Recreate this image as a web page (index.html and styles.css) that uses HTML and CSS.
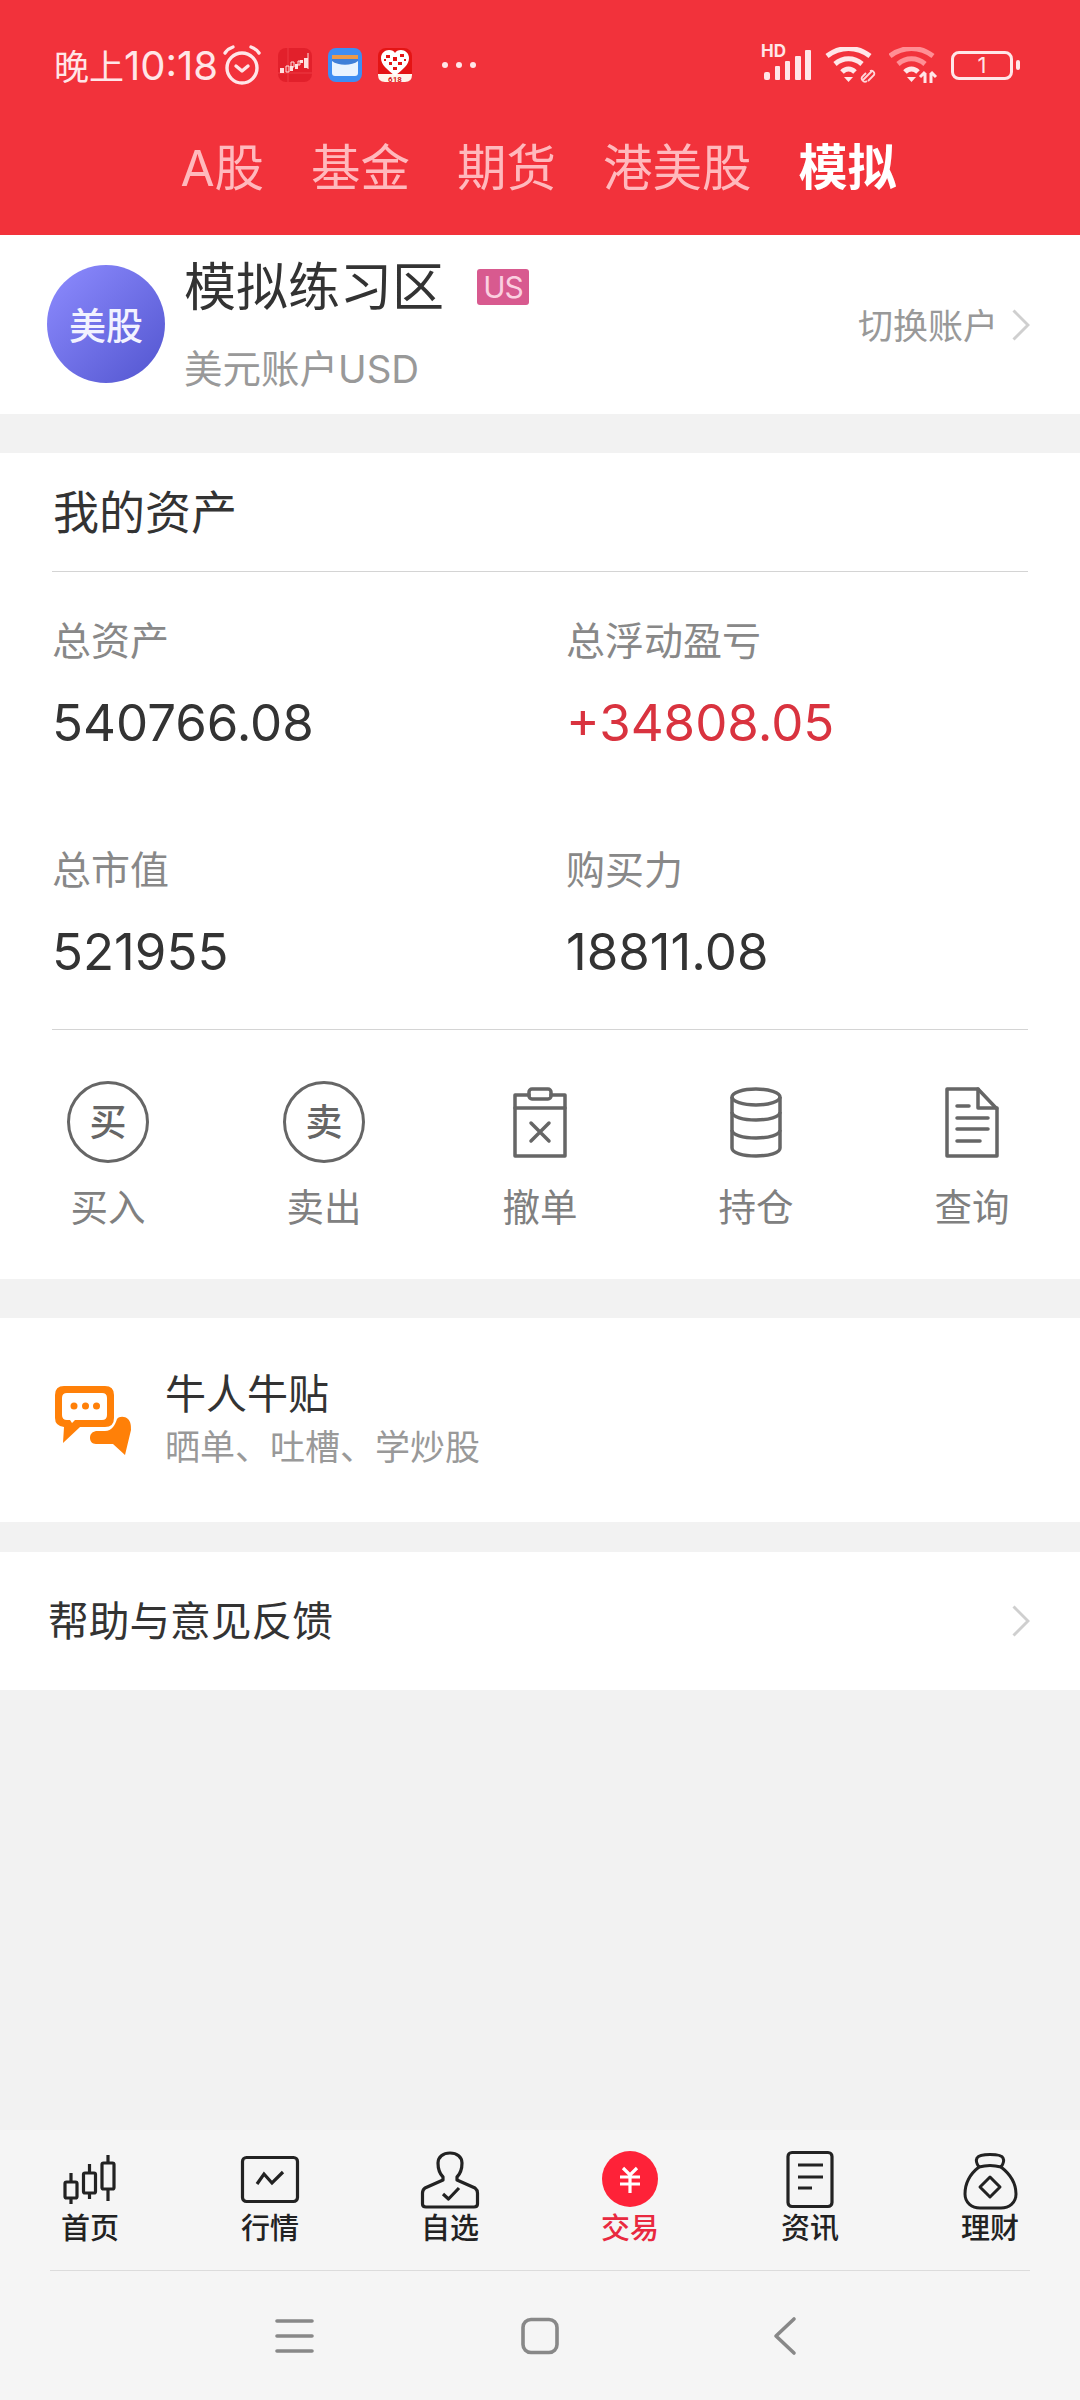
FILE: index.html
```html
<!DOCTYPE html>
<html lang="zh-CN">
<head>
<meta charset="utf-8">
<title>模拟练习区</title>
<link rel="stylesheet" href="styles.css">
</head>
<body>
<div class="page">
  <header class="header">
    <div class="status">
      <div class="status-left">
        <span class="time">晚上<span class="time-digits">10:18</span></span>
        <svg class="alarm" width="42" height="42" viewBox="0 0 42 42" fill="none" stroke="#ffe6e8" stroke-width="3.4" stroke-linecap="round" stroke-linejoin="round"><circle cx="21" cy="24" r="15"/><path d="M15 22l6 5 6-5"/><path d="M4 9c2-3 5-5 8-6"/><path d="M38 9c-2-3-5-5-8-6"/></svg>
        <svg class="app" width="34" height="34" viewBox="0 0 34 34"><rect width="34" height="34" rx="8" fill="#e2202b"/><path d="M0 25H34M10 0V34" stroke="#ee3a44" stroke-width="1"/><g fill="#ffe0e0"><rect x="2" y="20" width="4" height="5"/><rect x="12" y="18" width="3" height="5"/><rect x="17" y="16" width="3" height="5"/><rect x="22" y="12" width="3" height="3"/><rect x="26" y="10" width="4" height="10"/></g><path d="M8 18h3v6H8zM13 14h3v5h-3zM20 13h2v4h-2zM30 5v16" fill="none" stroke="#ffe0e0" stroke-width="1"/></svg>
        <svg class="app" width="34" height="34" viewBox="0 0 34 34"><rect width="34" height="34" rx="8" fill="#3e8df2"/><rect x="4" y="7" width="26" height="21" rx="3" fill="#e9f3ff"/><rect x="4" y="7" width="26" height="4" fill="#ec9a4a"/><path d="M4 11H30V13C24 18 10 18 4 13Z" fill="#3f7fd8"/></svg>
        <svg class="app" width="34" height="34" viewBox="0 0 34 34"><rect width="34" height="34" rx="8" fill="#e41414"/><path d="M0 26H34V27Q34 34 27 34H7Q0 34 0 27Z" fill="#fff4ea"/><path d="M17 28C9 21 3 17 3 10 3 5 7 2 11 2 14 2 16 3 17 5 18 3 20 2 23 2 27 2 31 5 31 10 31 17 25 21 17 28Z" fill="#fff"/><g fill="#e41414"><rect x="8" y="7" width="4" height="3"/><rect x="15" y="9" width="4" height="4"/><rect x="22" y="6" width="4" height="3"/><rect x="11" y="14" width="3" height="3"/><rect x="20" y="14" width="4" height="3"/><rect x="15" y="19" width="4" height="3"/><rect x="6" y="11" width="2" height="2"/><rect x="26" y="11" width="2" height="2"/></g><text class="app-618" x="17" y="33.5" text-anchor="middle">618</text></svg>
        <div class="dots"><i></i><i></i><i></i></div>
      </div>
      <div class="status-right">
        <div class="signal">
          <span class="hd">HD</span>
          <svg width="50" height="34" viewBox="0 0 50 34" fill="#ffe6e8"><rect x="3" y="24" width="6" height="8" rx="2"/><rect x="14" y="18" width="5" height="14" rx="1"/><rect x="24" y="13" width="5" height="19" rx="1"/><rect x="34" y="8" width="6" height="24" rx="1"/><rect x="44" y="2" width="6" height="30" rx="1"/></svg>
        </div>
        <svg class="wifi" width="52" height="36" viewBox="0 0 52 36" fill="none" stroke-linecap="butt"><g stroke="#ffe6e8" stroke-width="5"><path d="M2 9C15-1 32-1 45 9"/><path d="M10 17C18 10 29 10 37 17"/><path d="M17 25C21 21 26 21 30 25"/></g><path d="M23.500 35L19 30H28Z" fill="#ffe6e8"/><path d="M38 33l9-9M43 34l6-6a3 3 0 0 0-4-4M41 26l-3 3a3 3 0 0 0 4 5" stroke="#ffd6da" stroke-width="1.800"/></svg>
        <svg class="wifi wifi-b" width="50" height="36" viewBox="0 0 50 36" fill="none"><g stroke="#ff8f95" stroke-width="5"><path d="M1 9C14-1 31-1 44 9"/><path d="M9 17C17 10 28 10 36 17"/></g><path d="M16 25C20 21 25 21 29 25" stroke="#ffe6e8" stroke-width="5"/><path d="M22.500 35L18 30H27Z" fill="#ffe6e8"/><path d="M36 36V26M31 30l5-5M42 36V26M42 25l5 5" stroke="#ffe6e8" stroke-width="3"/></svg>
        <div class="battery"><div class="battery-body">1</div><i class="battery-nub"></i></div>
      </div>
    </div>
    <nav class="tabs">
      <span class="tab">A股</span>
      <span class="tab">基金</span>
      <span class="tab">期货</span>
      <span class="tab">港美股</span>
      <span class="tab tab-active">模拟</span>
    </nav>
  </header>

  <section class="account">
    <div class="avatar">美股</div>
    <div class="account-info">
      <div class="account-name"><span>模拟练习区</span><span class="badge">US</span></div>
      <div class="account-sub">美元账户USD</div>
    </div>
    <div class="switch">
      <span class="switch-text">切换账户</span>
      <svg class="chev" width="18" height="32" viewBox="0 0 18 32" fill="none"><path d="M1.500 1.500L16 16 1.500 30.500" stroke="#cfcfcf" stroke-width="3"/></svg>
    </div>
  </section>

  <section class="assets">
    <h2 class="assets-title">我的资产</h2>
    <div class="stats">
      <div><div class="stat-label">总资产</div><div class="stat-value">540766.08</div></div>
      <div><div class="stat-label">总浮动盈亏</div><div class="stat-value stat-up">+34808.05</div></div>
      <div><div class="stat-label">总市值</div><div class="stat-value">521955</div></div>
      <div><div class="stat-label">购买力</div><div class="stat-value">18811.08</div></div>
    </div>
    <div class="actions">
      <div class="action"><div class="ring">买</div><span>买入</span></div>
      <div class="action"><div class="ring">卖</div><span>卖出</span></div>
      <div class="action">
        <svg width="80" height="80" viewBox="0 0 80 80" fill="none" stroke="#666" stroke-width="3.500" stroke-linejoin="round" stroke-linecap="round"><path d="M29 13H15V74H65V13H51"/><rect x="29" y="7" width="22" height="10" rx="3"/><path d="M15 26H65M31 41L49 59M49 41L31 59"/></svg>
        <span>撤单</span>
      </div>
      <div class="action">
        <svg width="80" height="80" viewBox="0 0 80 80" fill="none" stroke="#666" stroke-width="3.500" stroke-linejoin="round"><ellipse cx="40" cy="15" rx="24" ry="8"/><path d="M16 15V66C16 71 27 74 40 74S64 71 64 66V15"/><path d="M16 30C16 35 27 38 40 38S64 35 64 30"/><path d="M16 48C16 53 27 56 40 56S64 53 64 48"/></svg>
        <span>持仓</span>
      </div>
      <div class="action">
        <svg width="80" height="80" viewBox="0 0 80 80" fill="none" stroke="#666" stroke-width="3.500" stroke-linejoin="round" stroke-linecap="round"><path d="M15 7H46L65 27V74H15Z"/><path d="M46 7V26H65"/><path d="M25 24H37M25 36H56M25 47H56M25 59H48"/></svg>
        <span>查询</span>
      </div>
    </div>
  </section>

  <section class="forum">
    <svg width="76" height="69" viewBox="0 0 76 69"><path fill-rule="evenodd" d="M9 0H50Q59 0 59 9V32Q59 41 50 41H25L8 57 9 41Q0 40 0 32V9Q0 0 9 0ZM12 7Q7 7 7 12V29Q7 34 12 34H15L17 37 20 34H47Q52 34 52 29V12Q52 7 47 7Z" fill="#ff8008"/><circle cx="19" cy="20" r="3.500" fill="#ff8008"/><circle cx="30.500" cy="20" r="3.500" fill="#ff8008"/><circle cx="41.500" cy="20" r="3.500" fill="#ff8008"/><path d="M62 33C64 30 70 30 73 33 76 36 76 40 76 44L70 69 58 58H41C37 58 35 55 35 52 35 48 37 46 41 45H50C57 45 60 39 62 33Z" fill="#ff8008"/></svg>
    <div class="forum-text">
      <div class="forum-title">牛人牛贴</div>
      <div class="forum-sub">晒单、吐槽、学炒股</div>
    </div>
  </section>

  <section class="help">
    <span class="help-text">帮助与意见反馈</span>
    <svg class="chev" width="18" height="32" viewBox="0 0 18 32" fill="none"><path d="M1.500 1.500L16 16 1.500 30.500" stroke="#cfcfcf" stroke-width="3"/></svg>
  </section>

  <div class="spacer"></div>

  <footer class="footer">
    <nav class="tabbar">
      <div class="nav-item">
        <svg width="64" height="60" viewBox="0 0 64 60" fill="none" stroke="#222" stroke-width="3.200"><path d="M13 23V32M13 48V54M31.500 14V23M31.500 43V49M50 5V13M50 39V51"/><rect x="7" y="32" width="12" height="16" rx="1.500"/><rect x="25.500" y="23" width="12" height="20" rx="1.500"/><rect x="44" y="13" width="12" height="26" rx="1.500"/></svg>
        <span>首页</span>
      </div>
      <div class="nav-item">
        <svg width="64" height="60" viewBox="0 0 64 60" fill="none" stroke="#222" stroke-width="3.200"><rect x="4.500" y="7.500" width="55" height="44" rx="4"/><path d="M19 34L26 24 34 33 45 22"/></svg>
        <span>行情</span>
      </div>
      <div class="nav-item">
        <svg width="64" height="60" viewBox="0 0 64 60" fill="none" stroke="#222" stroke-width="3.200" stroke-linejoin="round"><path d="M25 27C21 23 20 17 20 13 20 7 25 3 32 3S44 7 44 13C44 17 43 23 39 27V30L57 38Q59.500 40 59.500 43V54Q59.500 57 56 57H8Q4.500 57 4.500 54V43Q4.500 40 7 38L25 30Z"/><path d="M25 44L30.500 49 41 38"/></svg>
        <span>自选</span>
      </div>
      <div class="nav-item nav-active">
        <svg width="64" height="60" viewBox="0 0 64 60"><ellipse cx="32" cy="29" rx="28" ry="28" fill="#fe2238"/><path d="M25 18L32 25 39 18M22 27H42M22 34H42M32 26V43" fill="none" stroke="#fff" stroke-width="3.200"/></svg>
        <span>交易</span>
      </div>
      <div class="nav-item">
        <svg width="64" height="60" viewBox="0 0 64 60" fill="none" stroke="#222" stroke-width="3.200"><rect x="10" y="2.500" width="44" height="54" rx="4"/><path d="M20 15H45M20 27H45M20 38H34"/></svg>
        <span>资讯</span>
      </div>
      <div class="nav-item">
        <svg width="64" height="60" viewBox="0 0 64 60" fill="none" stroke="#222" stroke-width="3" stroke-linejoin="round"><path d="M21 17C12 24 7 34 7 44 7 53 14 58 22 58H43C51 58 58 53 58 44 58 34 52 24 43 17"/><path d="M21 17C18 13 18 10 19 8 21 5 26 4.500 32 4.500S44 5 45 8C46 10 46 13 43 17 36 15 28 15 21 17Z"/><path d="M32 27L42 37 32 47 22 37Z"/></svg>
        <span>理财</span>
      </div>
    </nav>
    <div class="softkeys">
      <svg width="60" height="40" viewBox="0 0 60 40" fill="none" stroke="#888" stroke-width="3.600" stroke-linecap="round"><path d="M12 5H47M12 20H47M12 35H47"/></svg>
      <svg width="60" height="40" viewBox="0 0 60 40" fill="none" stroke="#888" stroke-width="3.600"><rect x="13" y="3.500" width="34" height="33" rx="8"/></svg>
      <svg width="60" height="40" viewBox="0 0 60 40" fill="none" stroke="#888" stroke-width="3.600" stroke-linecap="round" stroke-linejoin="round"><path d="M39 3L21 20 39 37"/></svg>
    </div>
  </footer>
</div>
</body>
</html>
```
FILE: styles.css
```css
* { box-sizing: border-box; margin: 0; padding: 0; }
html, body { width: 1080px; height: 2400px; overflow: hidden; }
body { font-family: Inter, "Noto Sans CJK SC", sans-serif; color: #333; background: #f2f2f2; }
.page { width: 1080px; height: 2400px; display: flex; flex-direction: column; }

.header { height: 235px; background: #f2323b; flex: none; }
.status { height: 130px; display: flex; justify-content: space-between; align-items: center; padding: 0 60px 0 54px; }
.status-left, .status-right { display: flex; align-items: center; }
.time { font-size: 35px; line-height: 44px; color: #ffe6e8; white-space: nowrap; padding-top: 2px; }
.time-digits { font-size: 40px; }
.alarm { margin-left: 3px; }
.app { margin-left: 16px; }
.alarm + .app { margin-left: 15px; }
.app-618 { font-family: Roboto, sans-serif; font-size: 8px; font-weight: 700; fill: #d41818; }
.dots { display: flex; gap: 8px; margin-left: 30px; }
.dots i { width: 6px; height: 6px; border-radius: 50%; background: #ffe6e8; }
.signal { position: relative; width: 50px; height: 34px; margin-right: 14px; }
.signal svg { display: block; }
.hd { position: absolute; left: 0; top: -6px; font-size: 17px; line-height: 18px; font-weight: 700; color: #ffe6e8; }
.wifi { margin-right: 12px; }
.wifi-b { margin-right: 12px; }
.battery { display: flex; align-items: center; }
.battery-body { width: 62px; height: 29px; border: 3px solid #ffe6e8; border-radius: 8px; color: #ffe6e8; font-size: 22px; line-height: 23px; text-align: center; }
.battery-nub { width: 4px; height: 10px; margin-left: 3px; background: #ffe6e8; border-radius: 2px; }

.tabs { height: 76px; display: flex; justify-content: center; align-items: center; gap: 47px; padding-right: 3px; }
.tab { font-size: 49.500px; line-height: 76px; color: #ffb9bd; white-space: nowrap; }
.tab-active { color: #fff; font-weight: 700; font-size: 49px; }

.account { height: 179px; background: #fff; display: flex; align-items: center; padding: 0 50px 0 47px; flex: none; }
.avatar { width: 118px; height: 118px; margin-top: -2px; border-radius: 50%; background: linear-gradient(135deg, #8e8cff, #5255cf); color: #f2f2ff; font-size: 37px; font-weight: 500; display: flex; align-items: center; justify-content: center; flex: none; }
.account-info { margin: 2px 0 0 19px; display: flex; flex-direction: column; gap: 26px; flex: 1; }
.account-name { font-size: 52px; line-height: 60px; display: flex; align-items: center; color: #333; }
.badge { margin: -2px 0 0 33px; width: 52px; height: 36px; border-radius: 3px; background: #d85a8f; color: #fbd0e0; font-size: 30px; line-height: 36px; letter-spacing: -1px; text-align: center; }
.account-sub { font-size: 38.500px; line-height: 50px; color: #999; }
.switch { display: flex; align-items: center; gap: 14px; font-size: 35px; color: #999; }
.switch-text { margin-bottom: 2px; }
.chev { display: block; flex: none; }

.assets { margin-top: 39px; height: 826px; background: #fff; padding-top: 0; flex: none; }
.assets-title { margin: 0 52px; height: 119px; border-bottom: 1px solid #d4d4d4; padding-left: 1px; font-size: 46px; font-weight: 400; line-height: 118px; color: #333; }
.stats { margin: 0 52px; padding: 44px 0 43px 0; display: grid; grid-template-columns: 514px 1fr; row-gap: 88px; border-bottom: 1px solid #d4d4d4; }
.stat-label { font-size: 39px; line-height: 50px; color: #888; }
.stat-value { margin-top: 22px; margin-bottom: -1px; font-size: 51px; line-height: 70px; color: #333; }
.stat-up { color: #d9333f; }
.actions { display: grid; grid-template-columns: repeat(5, 1fr); padding-top: 52px; }
.action { display: flex; flex-direction: column; align-items: center; gap: 21px; font-size: 37.500px; line-height: 50px; color: #808080; }
.action svg { display: block; }
.ring { width: 82px; height: 82px; margin: -1px 0; border: 3.500px solid #666; border-radius: 50%; display: flex; align-items: center; justify-content: center; font-size: 37px; font-weight: 500; line-height: 1; color: #666; }

.forum { margin-top: 39px; height: 204px; background: #fff; display: flex; align-items: center; padding-left: 55px; flex: none; }
.forum svg { display: block; flex: none; }
.forum-text { margin-left: 34px; padding-top: 2px; }
.forum-title { font-size: 41px; line-height: 52px; color: #333; }
.forum-sub { font-size: 35px; line-height: 54px; color: #999; }

.help { margin-top: 30px; height: 138px; background: #fff; display: flex; align-items: center; justify-content: space-between; padding: 0 50px 0 48px; font-size: 40.700px; color: #333; flex: none; }
.help-text { margin-bottom: 6px; }

.spacer { flex: 1; }

.footer { height: 270px; background: #f5f5f5; flex: none; }
.tabbar { height: 141px; margin: 0 50px; border-bottom: 1px solid #dcdcdc; display: flex; justify-content: center; }
.nav-item { width: 180px; flex: none; padding-top: 20px; display: flex; flex-direction: column; align-items: center; font-size: 29px; line-height: 38px; font-weight: 500; color: #222; }
.nav-item svg { display: block; }
.nav-active { color: #e9293f; }
.softkeys { height: 129px; display: flex; justify-content: center; align-items: center; gap: 185px; }
.softkeys svg { display: block; }
```
